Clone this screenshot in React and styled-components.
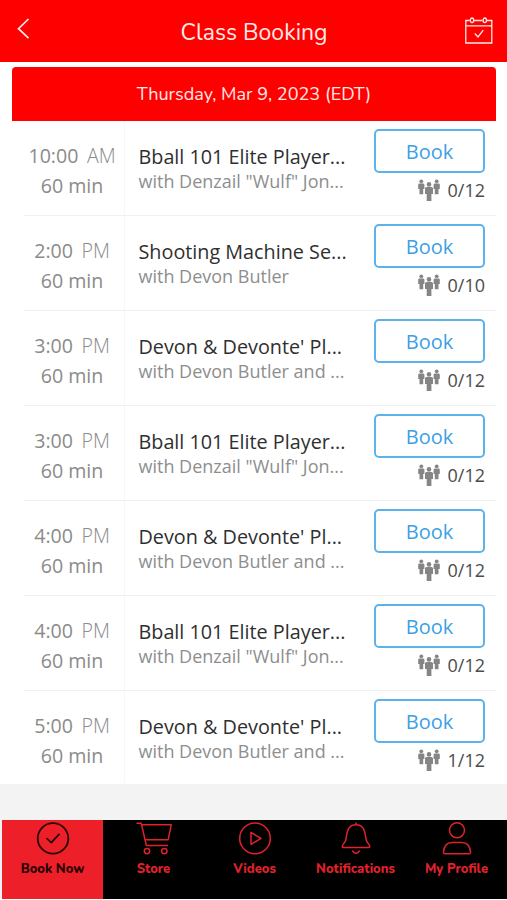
import styled, { createGlobalStyle } from 'styled-components';

const GlobalStyle = createGlobalStyle`
  * { box-sizing: border-box; }

  body {
    margin: 0;
    background: #fff;
    font-family: 'Open Sans', 'Noto Sans', sans-serif;
  }
`;

const Page = styled.div`
  display: flex;
  flex-direction: column;
  width: 507px;
  height: 900px;
  overflow: hidden;
  background: #fff;
`;

const Header = styled.header`
  display: grid;
  grid-template-columns: 60px 1fr 60px;
  height: 61.5px;
  flex: none;
  background: #fe0000;
  color: #ffe9e6;
`;

const HeaderTitle = styled.h1`
  margin: 0;
  padding: 19px 0 0 1px;
  text-align: center;
  font-family: Nunito, Lato, sans-serif;
  font-size: 23px;
  font-weight: 400;
  line-height: 28px;
  white-space: nowrap;
`;

const BackBtn = styled.button`
  display: flex;
  padding: 18px 0 0 17px;
  border: none;
  background: none;
  color: inherit;
  cursor: pointer;
`;

const CalendarBtn = styled(BackBtn)`
  padding: 16px 0 0 17px;
`;

const DateBar = styled.div`
  margin: 5.5px 11px 0 12px;
  height: 54px;
  flex: none;
  border-radius: 4px 4px 0 0;
  background: #fe0000;
  color: #ffe9e6;
  text-align: center;
  font-family: Nunito, Lato, sans-serif;
  font-size: 18.1px;
  line-height: 54px;
`;

const List = styled.main`
  flex: none;
  height: 663px;
  display: grid;
  grid-template-rows: repeat(6, 95px) 93px;
  padding: 0 11px 0 24px;
`;

const Row = styled.div`
  display: grid;
  grid-template-columns: 101px 1fr 122px;
  min-height: 0;
  border-bottom: 1px solid #eef0f1;

  &:last-child { border-bottom-color: transparent; }
`;

const TimeCol = styled.div`
  padding: 20px 4px 0 0;
  border-right: 1px solid #f5f7f8;
  text-align: center;
  font-size: 19.6px;
  line-height: 29.5px;
  color: #8b8b8b;
  white-space: nowrap;
`;

const Meridiem = styled.span`
  margin-left: 8.5px;
  font-weight: 300;
`;

const Info = styled.div`
  min-width: 0;
  padding: 22px 0 0 13.5px;
  white-space: nowrap;
`;

const ClassName = styled.div`
  font-size: 19.8px;
  line-height: 27px;
  color: #2f2f2f;
`;

const Coach = styled.div`
  font-size: 18px;
  line-height: 23px;
  color: #8e8e8e;
`;

const Actions = styled.div`
  padding: 8px 11px 0 0;
`;

const BookBtn = styled.button`
  display: block;
  width: 111px;
  height: 44px;
  padding: 1px 0 0;
  border: 2px solid #5cb3ec;
  border-radius: 5px;
  background: #fff;
  color: #3d9fe4;
  font-family: inherit;
  font-size: 20px;
  line-height: 40px;
  cursor: pointer;
`;

const Spots = styled.div`
  display: flex;
  align-items: center;
  justify-content: flex-end;
  gap: 8px;
  margin-top: 5px;
  font-size: 18px;
  line-height: 24px;
  color: #4c4c4c;
`;

const Footer = styled.footer`
  height: 115px;
  flex: none;
  background: #f3f3f3;
  overflow: hidden;
`;

const TabBar = styled.nav`
  display: grid;
  grid-template-columns: repeat(5, 101px);
  height: 79.5px;
  margin: 35.5px 0 0 2px;
  background: #000;
`;

const Tab = styled.a`
  display: flex;
  flex-direction: column;
  align-items: center;
  padding-top: 2px;
  background: ${({ $active }) => ($active ? '#ed2029' : '#000')};
  color: ${({ $active }) => ($active ? '#280305' : '#e0222c')};
  font-family: Nunito, Lato, sans-serif;
  font-size: 13px;
  font-weight: 800;
  line-height: 18px;
  white-space: nowrap;

  svg { margin-bottom: 5px; }
`;

const BottomEdge = styled.div`
  height: 1px;
  background: #fff;
`;

const classes = [
  { time: '10:00', period: 'AM', name: 'Bball 101 Elite Player...', coach: 'with Denzail "Wulf" Jon...', spots: '0/12' },
  { time: '2:00', period: 'PM', name: 'Shooting Machine Se...', coach: 'with Devon Butler', spots: '0/10' },
  { time: '3:00', period: 'PM', name: "Devon & Devonte' Pl...", coach: 'with Devon Butler and ...', spots: '0/12' },
  { time: '3:00', period: 'PM', name: 'Bball 101 Elite Player...', coach: 'with Denzail "Wulf" Jon...', spots: '0/12' },
  { time: '4:00', period: 'PM', name: "Devon & Devonte' Pl...", coach: 'with Devon Butler and ...', spots: '0/12' },
  { time: '4:00', period: 'PM', name: 'Bball 101 Elite Player...', coach: 'with Denzail "Wulf" Jon...', spots: '0/12' },
  { time: '5:00', period: 'PM', name: "Devon & Devonte' Pl...", coach: 'with Devon Butler and ...', spots: '1/12' },
];

const BackIcon = () => (
  <svg width="14" height="22" viewBox="0 0 14 22" fill="none" stroke="currentColor" strokeWidth="1.7">
    <path d="M11.5 1L1.5 10.7L11.5 20.2" />
  </svg>
);

const CalendarIcon = () => (
  <svg width="30" height="30" viewBox="0 0 30 30" fill="none" stroke="currentColor" strokeWidth="1.3">
    <path d="M5.8 4.5H1.8V27H27.8V4.5H23M10 4.5H18.5M1.8 9.8H27.8" />
    <ellipse cx="8" cy="4.3" rx="1.7" ry="2.3" />
    <ellipse cx="20.8" cy="4.3" rx="1.7" ry="2.3" />
    <path d="M10.8 17.5L14 21L19.3 14.2" />
  </svg>
);

// three standing figures, the middle one in front
const PeopleIcon = () => (
  <svg width="22" height="23" viewBox="0 0 22 23" fill="#858585">
    <circle cx="3.3" cy="2.3" r="1.9" />
    <path d="M1.5 4.4h3.6q1.3 0 1.3 1.3v4.2H5.2V15.2H1.5V9.9H.2V5.7q0-1.3 1.3-1.3z" />
    <circle cx="18.7" cy="2.3" r="1.9" />
    <path d="M16.9 4.4h3.6q1.3 0 1.3 1.3v4.2h-1.3V15.2h-3.7V9.9h-1.2V5.7q0-1.3 1.3-1.3z" />
    <circle cx="11" cy="5.4" r="2.3" />
    <path d="M8.5 8h5q1.5 0 1.5 1.5v5.6h-1.6V22H8.7v-6.9H7V9.5q0-1.5 1.5-1.5z" />
  </svg>
);

const tabIconProps = {
  width: 38,
  height: 33,
  viewBox: '0 0 38 33',
  fill: 'none',
  stroke: 'currentColor',
  strokeLinecap: 'round',
  strokeLinejoin: 'round',
};

const CheckIcon = () => (
  <svg {...tabIconProps} strokeWidth="1.8">
    <circle cx="19" cy="16.4" r="15.3" />
    <path d="M13 16.6L17.3 20.6L25 12.4" />
  </svg>
);

const CartIcon = () => (
  <svg {...tabIconProps} strokeWidth="1.5">
    <path d="M2 1.2H6.2L11.4 23.6H32.5" />
    <path d="M6.6 2.7H36.3L33.2 17.7H10.2" />
    <circle cx="12" cy="29.1" r="2.7" />
    <circle cx="29.3" cy="29.1" r="2.7" />
  </svg>
);

const PlayIcon = () => (
  <svg {...tabIconProps} strokeWidth="1.5">
    <circle cx="19" cy="16.4" r="15.3" />
    <path d="M15 10.5V22.3L25 16.4Z" />
  </svg>
);

const BellIcon = () => (
  <svg {...tabIconProps} strokeWidth="1.5">
    <path d="M19 1v1.5M8.8 18C9.7 15 8.8 2.8 19 2.8S28.3 15 29.2 18C30 21 32.8 22.5 32.8 24.6Q32.8 25.6 31.8 25.6H6.2Q5.2 25.6 5.2 24.6C5.2 22.5 8 21 8.8 18Z" />
    <path d="M15.7 29Q19 33.4 22.3 29" />
  </svg>
);

const ProfileIcon = () => (
  <svg {...tabIconProps} strokeWidth="1.5">
    <circle cx="19" cy="8.3" r="7.5" />
    <path d="M6.8 31.7Q5.4 31.7 5.4 30.3C6 24 9.4 20.5 14 20.5H24C28.6 20.5 32 24 32.6 30.3Q32.6 31.7 31.2 31.7Z" />
  </svg>
);

const tabs = [
  { label: 'Book Now', Icon: CheckIcon },
  { label: 'Store', Icon: CartIcon },
  { label: 'Videos', Icon: PlayIcon },
  { label: 'Notifications', Icon: BellIcon },
  { label: 'My Profile', Icon: ProfileIcon },
];

const App = () => (
  <>
    <GlobalStyle />
    <Page>
      <Header>
        <BackBtn aria-label="Back"><BackIcon /></BackBtn>
        <HeaderTitle>Class Booking</HeaderTitle>
        <CalendarBtn aria-label="Calendar"><CalendarIcon /></CalendarBtn>
      </Header>

      <DateBar>Thursday, Mar 9, 2023 (EDT)</DateBar>

      <List>
        {classes.map((item, i) => (
          <Row key={i}>
            <TimeCol>
              <div>{item.time}<Meridiem>{item.period}</Meridiem></div>
              <div>60 min</div>
            </TimeCol>
            <Info>
              <ClassName>{item.name}</ClassName>
              <Coach>{item.coach}</Coach>
            </Info>
            <Actions>
              <BookBtn>Book</BookBtn>
              <Spots><PeopleIcon />{item.spots}</Spots>
            </Actions>
          </Row>
        ))}
      </List>

      <Footer>
        <TabBar>
          {tabs.map(({ label, Icon }, i) => (
            <Tab key={label} $active={i === 0}>
              <Icon />
              {label}
            </Tab>
          ))}
        </TabBar>
      </Footer>
      <BottomEdge />
    </Page>
  </>
);

export default App;
